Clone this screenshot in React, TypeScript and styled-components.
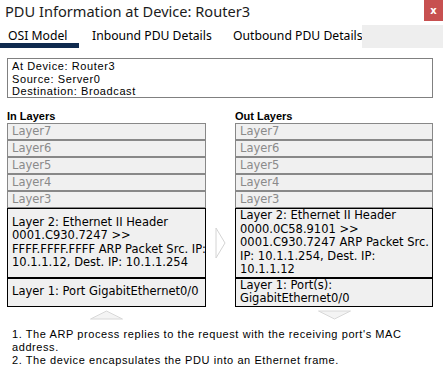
import React from "react";
import styled, { createGlobalStyle } from "styled-components";

const Global = createGlobalStyle`
  html, body { margin: 0; padding: 0; background: #ffffff; }
  * { box-sizing: border-box; }
`;

const Window = styled.div`
  width: 443px;
  height: 392px;
  background: #ffffff;
  overflow: hidden;
  display: flex;
  flex-direction: column;
`;

const TitleBar = styled.div`
  height: 25px;
  display: flex;
  justify-content: space-between;
  align-items: flex-start;
`;

const Title = styled.div`
  font-family: "Noto Sans", sans-serif;
  font-size: 14.6px;
  line-height: 22px;
  color: #1b1b1b;
  padding-left: 5px;
`;

const CloseButton = styled.div`
  width: 19px;
  height: 21px;
  background: #c75050;
  color: #ffffff;
  font-family: "DejaVu Sans", sans-serif;
  font-weight: bold;
  font-size: 10px;
  display: flex;
  align-items: center;
  justify-content: center;
`;

const TabBar = styled.div`
  height: 23px;
  display: flex;
`;

const Tab = styled.div<{ $w: number; $pl: number; $active?: boolean }>`
  width: ${(p) => p.$w}px;
  padding-left: ${(p) => p.$pl}px;
  padding-top: 4px;
  font-family: "Noto Sans", sans-serif;
  font-size: 12.2px;
  line-height: 14px;
  color: #000000;
  white-space: nowrap;
  border-bottom: 5px solid ${(p) => (p.$active ? "#0f2a4e" : "transparent")};
`;

const TabFiller = styled.div`
  flex: 1;
  background: #eeeeee;
`;

const Content = styled.div`
  padding: 10px 10px 0 7px;
  display: flex;
  flex-direction: column;
`;

const InfoBox = styled.div`
  border: 1px solid #808080;
  height: 40px;
  padding: 1px 0 0 4px;
  font-family: "Liberation Sans", Arial, sans-serif;
  font-size: 11px;
  letter-spacing: 0.6px;
  line-height: 12.5px;
  color: #000000;
`;

const LayersGrid = styled.div`
  margin-top: 12px;
  display: grid;
  grid-template-columns: 199px 29px 198px;
`;

const ColumnLabel = styled.div<{ $col: number }>`
  grid-column: ${(p) => p.$col};
  font-family: "Liberation Sans", Arial, sans-serif;
  font-weight: bold;
  font-size: 11px;
  line-height: 13px;
  color: #000000;
`;

const LayerRow = styled.div<{ $col: number; $active?: boolean }>`
  grid-column: ${(p) => p.$col};
  background: #f0f0f0;
  border: 1px solid ${(p) => (p.$active ? "#000000" : "#888888")};
  min-height: 17px;
  padding: 0 1px 0 4px;
  display: flex;
  align-items: center;
  font-family: "DejaVu Sans", sans-serif;
  font-size: 11.5px;
  line-height: 13.5px;
  white-space: nowrap;
  color: ${(p) => (p.$active ? "#000000" : "#8a8a8a")};
`;

const MidCell = styled.div`
  grid-column: 2;
  display: flex;
  align-items: center;
  justify-content: center;
`;

const Spacer = styled.div`
  grid-column: 2;
`;

const ArrowCell = styled.div<{ $col: number }>`
  grid-column: ${(p) => p.$col};
  display: flex;
  justify-content: center;
  padding-top: 3px;
  height: 13px;
`;

const Description = styled.div`
  margin-top: 8px;
  padding-left: 5px;
  width: 430px;
  font-family: "Liberation Sans", Arial, sans-serif;
  font-size: 11px;
  letter-spacing: 0.58px;
  line-height: 13px;
  color: #000000;
  white-space: nowrap;
`;

const RightArrow = () => (
  <svg width="11" height="32" viewBox="0 0 11 32">
    <path d="M1 1 L10 16 L1 31 Z" fill="#ffffff" stroke="#d4d4d4" strokeWidth="1" />
  </svg>
);

const UpArrow = () => (
  <svg width="33" height="10" viewBox="0 0 33 10">
    <path d="M0.5 9 L16.5 1 L32.5 9 Z" fill="#f4f4f4" stroke="#d8d8d8" strokeWidth="1" />
  </svg>
);

const DownArrow = () => (
  <svg width="33" height="10" viewBox="0 0 33 10">
    <path d="M0.5 1 L16.5 9 L32.5 1 Z" fill="#f4f4f4" stroke="#d8d8d8" strokeWidth="1" />
  </svg>
);

const upper = ["Layer7", "Layer6", "Layer5", "Layer4", "Layer3"];

export default function App() {
  return (
    <Window>
      <Global />
      <TitleBar>
        <Title>PDU Information at Device: Router3</Title>
        <CloseButton>x</CloseButton>
      </TitleBar>
      <TabBar>
        <Tab $w={79} $pl={8} $active>
          OSI Model
        </Tab>
        <Tab $w={142} $pl={13}>
          Inbound PDU Details
        </Tab>
        <Tab $w={141} $pl={12}>
          Outbound PDU Details
        </Tab>
        <TabFiller />
      </TabBar>
      <Content>
        <InfoBox>
          At Device: Router3
          <br />
          Source: Server0
          <br />
          Destination: Broadcast
        </InfoBox>
        <LayersGrid>
          <ColumnLabel $col={1}>In Layers</ColumnLabel>
          <Spacer />
          <ColumnLabel $col={3}>Out Layers</ColumnLabel>
          {upper.map((l) => (
            <React.Fragment key={l}>
              <LayerRow $col={1}>{l}</LayerRow>
              <Spacer />
              <LayerRow $col={3}>{l}</LayerRow>
            </React.Fragment>
          ))}
          <LayerRow $col={1} $active>
            <div>
              Layer 2: Ethernet II Header
              <br />
              0001.C930.7247 &gt;&gt;
              <br />
              FFFF.FFFF.FFFF ARP Packet Src. IP:
              <br />
              10.1.1.12, Dest. IP: 10.1.1.254
            </div>
          </LayerRow>
          <MidCell>
            <RightArrow />
          </MidCell>
          <LayerRow $col={3} $active>
            <div>
              Layer 2: Ethernet II Header
              <br />
              0000.0C58.9101 &gt;&gt;
              <br />
              0001.C930.7247 ARP Packet Src.
              <br />
              IP: 10.1.1.254, Dest. IP:
              <br />
              10.1.1.12
            </div>
          </LayerRow>
          <LayerRow $col={1} $active>
            Layer 1: Port GigabitEthernet0/0
          </LayerRow>
          <Spacer />
          <LayerRow $col={3} $active>
            <div>
              Layer 1: Port(s):
              <br />
              GigabitEthernet0/0
            </div>
          </LayerRow>
          <ArrowCell $col={1}>
            <UpArrow />
          </ArrowCell>
          <Spacer />
          <ArrowCell $col={3}>
            <DownArrow />
          </ArrowCell>
        </LayersGrid>
        <Description>
          1. The ARP process replies to the request with the receiving port's MAC
          <br />
          address.
          <br />
          2. The device encapsulates the PDU into an Ethernet frame.
        </Description>
      </Content>
    </Window>
  );
}
